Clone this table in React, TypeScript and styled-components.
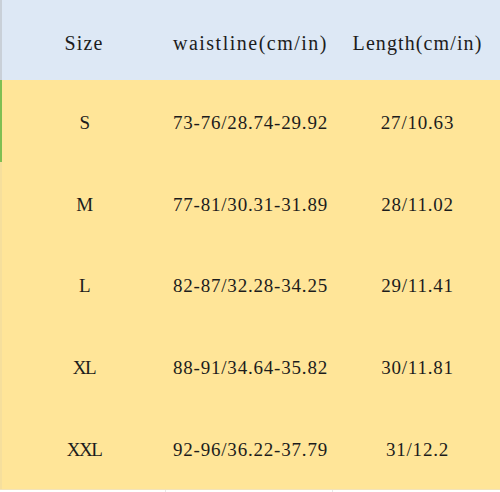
import React from 'react'
import styled, { createGlobalStyle } from 'styled-components'

const GlobalStyle = createGlobalStyle`
    html, body {
        margin: 0;
        padding: 0;
        background: #ffffff;
    }
`

const ChartContainer = styled.div`
    width: 500px;
    height: 492px;
    display: flex;
    flex-direction: column;
    font-family: "Liberation Serif", "Times New Roman", serif;
    color: #1c1c1c;
    overflow: hidden;
`

const HeaderRow = styled.div`
    display: grid;
    grid-template-columns: 166px 167px 167px;
    height: 80px;
    background: #dde8f5;
    border-left: 2px solid #c9d0d8;
    font-size: 20px;
    letter-spacing: 1.1px;
`

const DataRow = styled.div<{ $edge: string }>`
    display: grid;
    grid-template-columns: 166px 167px 167px;
    height: 81.8px;
    background: #ffe598;
    border-left: 2px solid ${p => p.$edge};
    font-size: 19px;
    letter-spacing: 0.8px;
`

const Cell = styled.div<{ $shift?: number; $spacing?: number }>`
    display: flex;
    align-items: center;
    justify-content: center;
    padding-top: ${p => p.$shift ?? 4}px;
    padding-right: 2px;
    white-space: nowrap;
    ${p => p.$spacing !== undefined && `letter-spacing: ${p.$spacing}px;`}
`

const FootStrip = styled.div`
    display: grid;
    grid-template-columns: 166px 167px 167px;
    flex: 1;
    background: #ffffff;
    border-top: 1px solid #f3e3b8;
`

const FootCell = styled.div`
    border-right: 1px solid #e8e8e8;
`

const rows = [
    { size: 'S', waist: '73-76/28.74-29.92', length: '27/10.63', edge: '#7fbf52' },
    { size: 'M', waist: '77-81/30.31-31.89', length: '28/11.02', edge: '#f6df9c' },
    { size: 'L', waist: '82-87/32.28-34.25', length: '29/11.41', edge: '#f6df9c' },
    { size: 'XL', waist: '88-91/34.64-35.82', length: '30/11.81', edge: '#f6df9c' },
    { size: 'XXL', waist: '92-96/36.22-37.79', length: '31/12.2', edge: '#f6df9c' },
]

const App = () => {
    return (
        <>
            <GlobalStyle />
            <ChartContainer>
                <HeaderRow>
                    <Cell $shift={6}>Size</Cell>
                    <Cell $shift={6} $spacing={1.5}>waistline(cm/in)</Cell>
                    <Cell $shift={6}>Length(cm/in)</Cell>
                </HeaderRow>
                {rows.map(row => (
                    <DataRow key={row.size} $edge={row.edge}>
                        <Cell $spacing={-1.5}>{row.size}</Cell>
                        <Cell>{row.waist}</Cell>
                        <Cell>{row.length}</Cell>
                    </DataRow>
                ))}
                <FootStrip>
                    <FootCell />
                    <FootCell />
                    <div />
                </FootStrip>
            </ChartContainer>
        </>
    )
}

export default App
